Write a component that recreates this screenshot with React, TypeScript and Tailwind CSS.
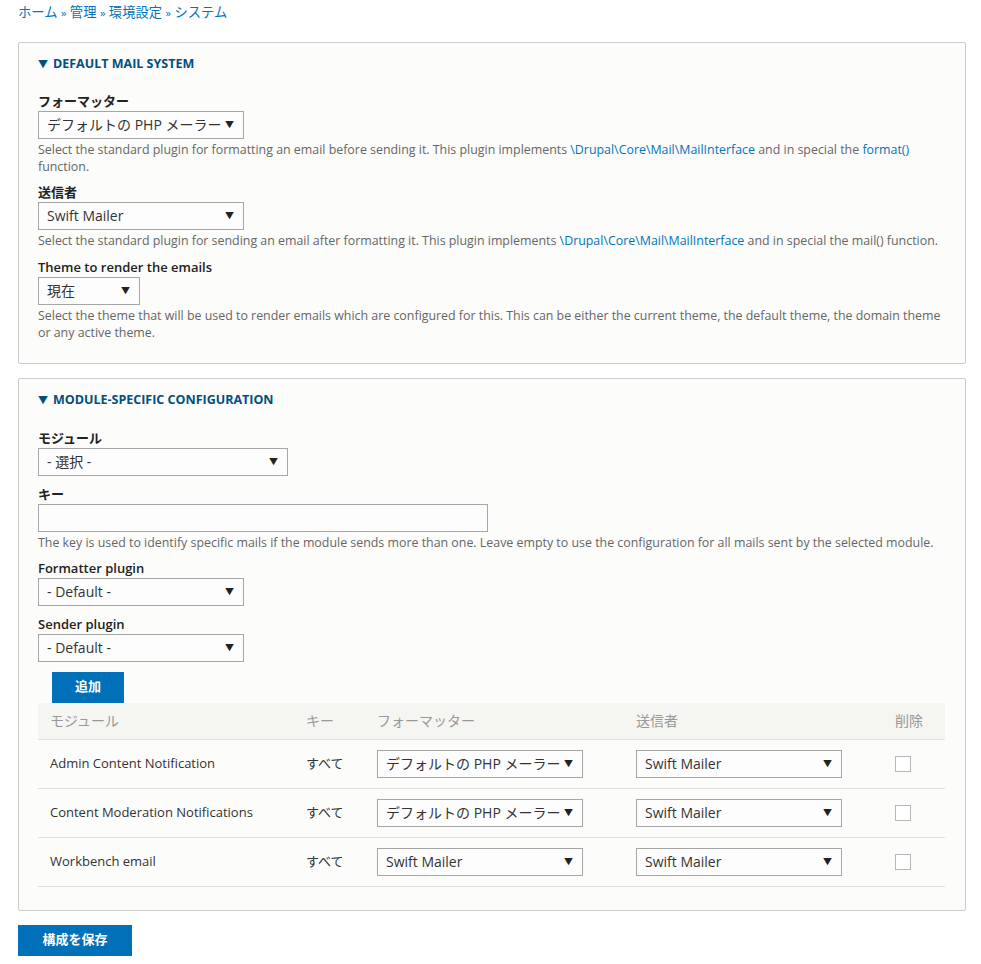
import React from "react";

const font = { fontFamily: '"Open Sans", "Noto Sans CJK JP", sans-serif' };

function Select({ value, className = "" }: { value: string; className?: string }) {
  return (
    <div
      className={`flex h-[28px] items-center justify-between border border-[#a6a6a6] bg-[#fdfdfd] pl-[8px] pr-[9px] text-[14px] text-[#333] ${className}`}
    >
      <span className="whitespace-nowrap">{value}</span>
      <span className="text-[9px] text-[#222]">▼</span>
    </div>
  );
}

function Link({ children }: { children: React.ReactNode }) {
  return <span className="text-[#0074bd]">{children}</span>;
}

function Legend({ children }: { children: React.ReactNode }) {
  return (
    <div className="flex items-center gap-[5px] text-[12.5px] font-bold uppercase text-[#004f80]">
      <span className="text-[10px]">▼</span>
      {children}
    </div>
  );
}

function Label({ children }: { children: React.ReactNode }) {
  return <div className="mb-[1px] text-[13px] font-semibold leading-[18px] text-[#222]">{children}</div>;
}

function Desc({ children }: { children: React.ReactNode }) {
  return <div className="mt-[2px] text-[12.4px] leading-[17px] text-[#666]">{children}</div>;
}

const rows = [
  { name: "Admin Content Notification", fmt: "デフォルトの PHP メーラー" },
  { name: "Content Moderation Notifications", fmt: "デフォルトの PHP メーラー" },
  { name: "Workbench email", fmt: "Swift Mailer" },
];

export default function App() {
  return (
    <div className="min-h-[964px] bg-white px-[18px] text-[#333]" style={font}>
      <div className="pt-[2px] text-[13.3px] leading-[20px] text-[#0074bd]">
        ホーム <span className="text-[11px]">»</span> 管理 <span className="text-[11px]">»</span> 環境設定{" "}
        <span className="text-[11px]">»</span> システム
      </div>

      <div className="mt-[19px] w-[948px] rounded-[2px] border border-[#ccc] bg-[#fcfcfa] px-[19px] pb-[22px] pt-[12px]">
        <Legend>Default mail system</Legend>
        <div className="mt-[18px]">
          <Label>フォーマッター</Label>
          <Select value="デフォルトの PHP メーラー" className="w-[206px]" />
          <Desc>
            Select the standard plugin for formatting an email before sending it. This plugin implements{" "}
            <Link>\Drupal\Core\Mail\MailInterface</Link> and in special the <Link>format()</Link> function.
          </Desc>
        </div>
        <div className="mt-[8px]">
          <Label>送信者</Label>
          <Select value="Swift Mailer" className="w-[206px]" />
          <Desc>
            Select the standard plugin for sending an email after formatting it. This plugin implements{" "}
            <Link>\Drupal\Core\Mail\MailInterface</Link> and in special the mail() function.
          </Desc>
        </div>
        <div className="mt-[9px]">
          <Label>Theme to render the emails</Label>
          <Select value="現在" className="w-[102px]" />
          <Desc>
            Select the theme that will be used to render emails which are configured for this. This can be either the
            current theme, the default theme, the domain theme or any active theme.
          </Desc>
        </div>
      </div>

      <div className="mt-[14px] w-[948px] rounded-[2px] border border-[#ccc] bg-[#fcfcfa] px-[19px] pb-[23px] pt-[12px]">
        <Legend>Module-specific configuration</Legend>
        <div className="mt-[19px]">
          <Label>モジュール</Label>
          <Select value="- 選択 -" className="w-[250px]" />
        </div>
        <div className="mt-[9px]">
          <Label>キー</Label>
          <div className="h-[28px] w-[450px] border border-[#a6a6a6] bg-[#fdfdfd]" />
          <Desc>
            The key is used to identify specific mails if the module sends more than one. Leave empty to use the
            configuration for all mails sent by the selected module.
          </Desc>
        </div>
        <div className="mt-[8px]">
          <Label>Formatter plugin</Label>
          <Select value="- Default -" className="w-[206px]" />
        </div>
        <div className="mt-[9px]">
          <Label>Sender plugin</Label>
          <Select value="- Default -" className="w-[206px]" />
        </div>
        <button className="ml-[14px] mt-[10px] flex h-[31px] w-[72px] items-center justify-center bg-[#0071b8] text-[13px] font-bold text-white">
          追加
        </button>

        <div className="w-[907px]">
          <div className="flex h-[37px] items-center border-b border-[#e0e0dc] bg-[#f5f5f2] text-[14px] text-[#999]">
            <div className="w-[268px] pl-[12px]">モジュール</div>
            <div className="w-[71px]">キー</div>
            <div className="w-[259px]">フォーマッター</div>
            <div className="w-[259px]">送信者</div>
            <div>削除</div>
          </div>
          {rows.map((r) => (
            <div key={r.name} className="flex h-[49px] items-center border-b border-[#e0e0dc] text-[13px] text-[#333]">
              <div className="w-[268px] pl-[12px]">{r.name}</div>
              <div className="w-[71px]">すべて</div>
              <div className="w-[259px]">
                <Select value={r.fmt} className="w-[206px]" />
              </div>
              <div className="w-[259px]">
                <Select value="Swift Mailer" className="w-[206px]" />
              </div>
              <div>
                <div className="h-[16px] w-[16px] border border-[#b8b8b8] bg-white" />
              </div>
            </div>
          ))}
        </div>
      </div>

      <button className="mt-[14px] flex h-[31px] w-[114px] items-center justify-center bg-[#0071b8] text-[13px] font-bold text-white">
        構成を保存
      </button>
    </div>
  );
}
